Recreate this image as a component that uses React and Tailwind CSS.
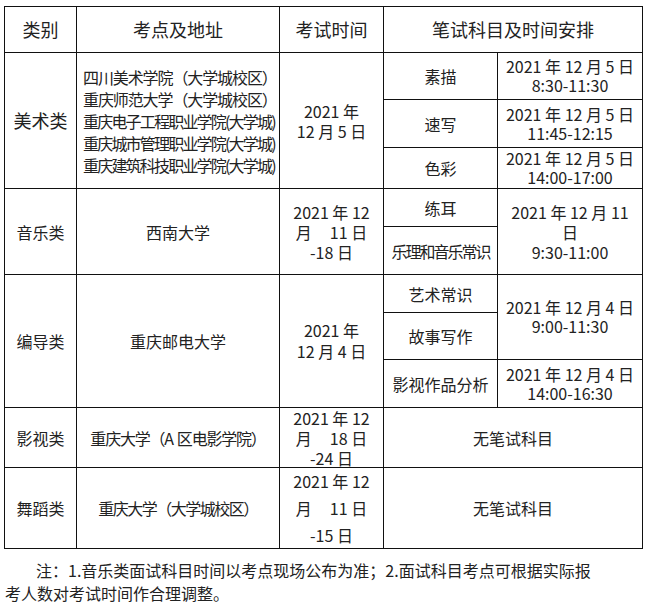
const cell = 'border-r border-b border-[#111] flex items-center justify-center text-center'

function Cell({ className = '', children }) {
  return <div className={`${cell} ${className}`}>{children}</div>
}

function ExamDate({ first, rest, gap = 'leading-[20px]' }) {
  return (
    <div className={gap}>
      <div>2021 年 12</div>
      <div>
        <span className="mr-[18px]">月</span>
        {first} 日
      </div>
      <div>{rest} 日</div>
    </div>
  )
}

export default function App() {
  return (
    <div className="w-[648px] h-[610px] bg-white text-[#222] font-['Noto_Sans_CJK_SC','Noto_Sans',sans-serif] text-[16px]">
      <div className="pt-[6px] pl-[4px]">
        <div className="grid grid-cols-[72px_203px_104px_114px_145px] grid-rows-[46px_47px_48px_41px_38px_48px_38px_47px_48px_60px_81px] border-l border-t border-[#111] w-[639px]">
          {/* header */}
          <Cell className="text-[18px]">类别</Cell>
          <Cell className="text-[18px]">考点及地址</Cell>
          <Cell className="text-[18px]">考试时间</Cell>
          <Cell className="col-span-2 text-[18px]">笔试科目及时间安排</Cell>

          {/* 美术类 */}
          <Cell className="row-span-3 text-[18px]">美术类</Cell>
          <Cell className="row-span-3 !justify-start pl-[6px] text-left">
            <div className="leading-[22px]">
              <div className="tracking-[-1.1px]">四川美术学院（大学城校区）</div>
              <div className="tracking-[-1.1px]">重庆师范大学（大学城校区）</div>
              <div className="tracking-[-1.8px]">重庆电子工程职业学院(大学城)</div>
              <div className="tracking-[-1.8px]">重庆城市管理职业学院(大学城)</div>
              <div className="tracking-[-1.8px]">重庆建筑科技职业学院(大学城)</div>
            </div>
          </Cell>
          <Cell className="row-span-3">
            <div className="leading-[20px]">
              <div>2021 年</div>
              <div>12 月 5 日</div>
            </div>
          </Cell>
          <Cell>素描</Cell>
          <Cell className="leading-[19px]">
            <div>
              <div>2021 年 12 月 5 日</div>
              <div>8:30-11:30</div>
            </div>
          </Cell>
          <Cell>速写</Cell>
          <Cell className="leading-[19px]">
            <div>
              <div>2021 年 12 月 5 日</div>
              <div>11:45-12:15</div>
            </div>
          </Cell>
          <Cell>色彩</Cell>
          <Cell className="leading-[19px]">
            <div>
              <div>2021 年 12 月 5 日</div>
              <div>14:00-17:00</div>
            </div>
          </Cell>

          {/* 音乐类 */}
          <Cell className="row-span-2">音乐类</Cell>
          <Cell className="row-span-2">西南大学</Cell>
          <Cell className="row-span-2">
            <ExamDate first="11" rest="-18" />
          </Cell>
          <Cell>练耳</Cell>
          <Cell className="row-span-2 leading-[20px]">
            <div>
              <div>2021 年 12 月 11</div>
              <div>日</div>
              <div>9:30-11:00</div>
            </div>
          </Cell>
          <Cell className="tracking-[-2px]">乐理和音乐常识</Cell>

          {/* 编导类 */}
          <Cell className="row-span-3">编导类</Cell>
          <Cell className="row-span-3">重庆邮电大学</Cell>
          <Cell className="row-span-3">
            <div className="leading-[21px]">
              <div>2021 年</div>
              <div>12 月 4 日</div>
            </div>
          </Cell>
          <Cell>艺术常识</Cell>
          <Cell className="row-span-2 leading-[19px]">
            <div>
              <div>2021 年 12 月 4 日</div>
              <div>9:00-11:30</div>
            </div>
          </Cell>
          <Cell>故事写作</Cell>
          <Cell>影视作品分析</Cell>
          <Cell className="leading-[19px]">
            <div>
              <div>2021 年 12 月 4 日</div>
              <div>14:00-16:30</div>
            </div>
          </Cell>

          {/* 影视类 */}
          <Cell>影视类</Cell>
          <Cell className="tracking-[-1.2px]">
            <span>
              重庆大学（A<span className="ml-[4px]">区电影学院）</span>
            </span>
          </Cell>
          <Cell>
            <ExamDate first="18" rest="-24" />
          </Cell>
          <Cell className="col-span-2">无笔试科目</Cell>

          {/* 舞蹈类 */}
          <Cell>舞蹈类</Cell>
          <Cell className="tracking-[-1.5px]">重庆大学（大学城校区）</Cell>
          <Cell>
            <ExamDate first="11" rest="-15" gap="leading-[27px]" />
          </Cell>
          <Cell className="col-span-2">无笔试科目</Cell>
        </div>

        <div className="mt-[10px] pl-[1px] leading-[23px]">
          <div className="indent-[31px]">注：1.音乐类面试科目时间以考点现场公布为准；2.面试科目考点可根据实际报</div>
          <div>考人数对考试时间作合理调整。</div>
        </div>
      </div>
    </div>
  )
}
